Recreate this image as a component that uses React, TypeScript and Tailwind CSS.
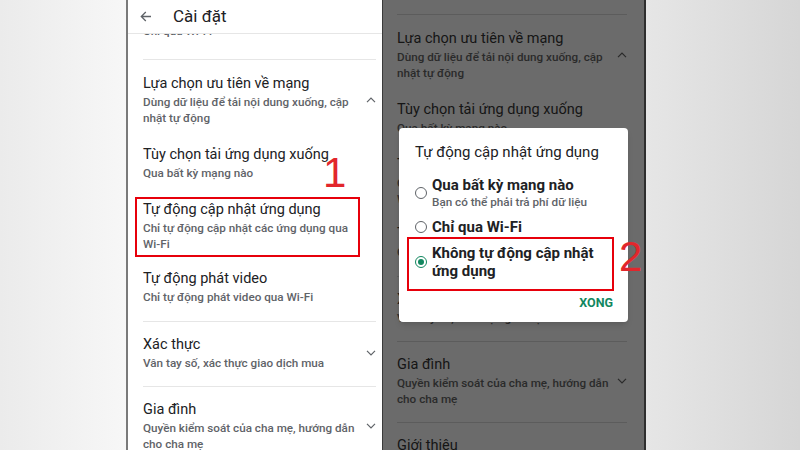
import React from 'react';

type Item = {
    title: string;
    lines: string[];
    chevron?: 'up' | 'down';
    highlight?: boolean;
    gap: string;
};

const items: Item[] = [
    { title: 'Lựa chọn ưu tiên về mạng', lines: ['Dùng dữ liệu để tải nội dung xuống, cập', 'nhật tự động'], chevron: 'up', gap: 'mt-[14px]' },
    { title: 'Tùy chọn tải ứng dụng xuống', lines: ['Qua bất kỳ mạng nào'], gap: 'mt-[19px]' },
    { title: 'Tự động cập nhật ứng dụng', lines: ['Chỉ tự động cập nhật các ứng dụng qua', 'Wi-Fi'], highlight: true, gap: 'mt-[16px]' },
    { title: 'Tự động phát video', lines: ['Chỉ tự động phát video qua Wi-Fi'], gap: 'mt-[12px]' },
];

const Chevron = ({ dir, color }: { dir: 'up' | 'down'; color: string }) => (
    <svg width="10" height="6" viewBox="0 0 10 6" className="shrink-0">
        <polyline
            points={dir === 'up' ? '1,5.2 5,1.2 9,5.2' : '1,0.8 5,4.8 9,0.8'}
            fill="none"
            stroke={color}
            strokeWidth="1.2"
        />
    </svg>
);

const Row = ({ item, dim, showBox }: { item: Item; dim: boolean; showBox: boolean }) => {
    const title = dim ? 'text-[#151515]' : 'text-[#202124]';
    const sub = dim ? 'text-[#2a2a2a]' : 'text-[#5f6368]';
    const chevColor = dim ? '#2a2a2a' : '#5f6368';
    const boxed = item.highlight
        ? `-ml-[8px] mr-[16px] border-2 border-solid pl-[6px] pt-[1px] pb-[3px] ${showBox ? 'border-red-600' : 'border-transparent'}`
        : '';
    return (
        <div className={`${item.gap} ${boxed} flex items-center`}>
            <div className="flex-1">
                <div className={`text-[14.5px] leading-[20px] ${title}`}>{item.title}</div>
                {item.lines.map((l, i) => (
                    <div key={i} className={`text-[11.7px] leading-[16px] font-medium whitespace-nowrap ${sub}`}>{l}</div>
                ))}
            </div>
            {item.chevron && <Chevron dir={item.chevron} color={chevColor} />}
        </div>
    );
};

const SettingsList = ({ dim }: { dim: boolean }) => {
    const line = dim ? 'bg-[#5c5c5c]' : 'bg-[#e6e6e6]';
    const title = dim ? 'text-[#151515]' : 'text-[#202124]';
    const sub = dim ? 'text-[#2a2a2a]' : 'text-[#5f6368]';
    const chevColor = dim ? '#2a2a2a' : '#5f6368';
    return (
        <div>
            {/* cut-off row above first divider */}
            <div className="h-[25px] overflow-hidden">
                <div className={`-mt-[11px] text-[11.7px] leading-[16px] font-medium ${sub}`}>Chỉ qua Wi-Fi</div>
            </div>
            <div className={`h-px ${line}`} />
            {items.map((it) => (
                <Row key={it.title} item={it} dim={dim} showBox={!dim} />
            ))}
            <div className={`mt-[16px] h-px ${line}`} />
            <div className="mt-[13px] flex items-center">
                <div className="flex-1">
                    <div className={`text-[14.5px] leading-[20px] ${title}`}>Xác thực</div>
                    <div className={`text-[11.7px] leading-[16px] font-medium ${sub}`}>Vân tay số, xác thực giao dịch mua</div>
                </div>
                <Chevron dir="down" color={chevColor} />
            </div>
            <div className={`mt-[15px] h-px ${line}`} />
            <div className="mt-[13px] flex items-center">
                <div className="flex-1">
                    <div className={`text-[14.5px] leading-[20px] ${title}`}>Gia đình</div>
                    <div className={`text-[11.7px] leading-[16px] font-medium whitespace-nowrap ${sub}`}>Quyền kiểm soát của cha mẹ, hướng dẫn</div>
                    <div className={`text-[11.7px] leading-[16px] font-medium ${sub}`}>cho cha mẹ</div>
                </div>
                <Chevron dir="down" color={chevColor} />
            </div>
            <div className={`mt-[15px] h-px ${line}`} />
            <div className={`mt-[13px] text-[14.5px] leading-[20px] ${title}`}>Giới thiệu</div>
        </div>
    );
};

const Radio = ({ checked }: { checked?: boolean }) => (
    <div
        className={`w-[12px] h-[12px] shrink-0 rounded-full border-[1.5px] flex items-center justify-center ${checked ? 'border-[#12875f]' : 'border-[#5f6368]'}`}
    >
        {checked && <div className="w-[6px] h-[6px] rounded-full bg-[#12875f]" />}
    </div>
);

export default function App() {
    return (
        <div
            className="w-[800px] h-[450px] flex overflow-hidden"
            style={{ fontFamily: 'Roboto, "Noto Sans", sans-serif' }}
        >
            <div className="w-[126px] h-full bg-gradient-to-r from-[#ebebeb] to-[#f7f7f7]" />

            {/* Left phone */}
            <div className="relative w-[256px] h-full bg-white border-l-2 border-[#7a7a7a] overflow-hidden">
                <div className="h-[34px] flex items-center pl-[12px] border-b border-[#e6e6e6]">
                    <svg width="12" height="11" viewBox="0 0 12 11">
                        <path d="M11 5.5H1.5M5.8 1L1.3 5.5l4.5 4.5" fill="none" stroke="#5f6368" strokeWidth="1.3" />
                    </svg>
                    <span className="ml-[21px] text-[17px] text-[#202124]">Cài đặt</span>
                </div>
                <div className="pl-[15px] pr-[6px]">
                    <SettingsList dim={false} />
                </div>
                <div
                    className="absolute left-[195px] top-[152px] text-[42px] leading-none text-[#e2262c]"
                    style={{ fontFamily: '"Liberation Sans", sans-serif' }}
                >
                    1
                </div>
            </div>

            {/* Right phone */}
            <div className="relative w-[264px] h-full bg-[#6b6b6b] border-l border-[#3a3a3a] border-r-2 border-r-[#2e2e2e] overflow-hidden">
                <div className="-mt-[11px] pl-[14px] pr-[17px]">
                    <SettingsList dim={true} />
                </div>

                <div className="absolute left-[16px] top-[128px] w-[229px] h-[194px] rounded-[4px] bg-white shadow-md pl-[16px] pr-[15px] pt-[14px]">
                    <div className="text-[15px] leading-[20px] text-[#202124]">Tự động cập nhật ứng dụng</div>
                    <div className="mt-[14px] flex items-center gap-[5px]">
                        <Radio />
                        <div>
                            <div className="text-[15px] leading-[18px] font-bold text-[#202124]">Qua bất kỳ mạng nào</div>
                            <div className="text-[11.7px] leading-[16px] font-medium text-[#5f6368]">Bạn có thể phải trả phí dữ liệu</div>
                        </div>
                    </div>
                    <div className="mt-[8px] flex items-center gap-[5px]">
                        <Radio />
                        <div className="text-[15px] leading-[18px] font-bold text-[#202124]">Chỉ qua Wi-Fi</div>
                    </div>
                    <div className="mt-[1px] -ml-[8px] -mr-[1px] border-2 border-solid border-red-600 pl-[6px] pt-[5px] pb-[9px] flex items-center gap-[5px]">
                        <Radio checked />
                        <div className="text-[15px] leading-[18px] font-bold text-[#202124]">
                            Không tự động cập nhật
                            <br />
                            ứng dụng
                        </div>
                    </div>
                    <div className="mt-[4px] text-right text-[12.5px] leading-[16px] font-bold text-[#12875f]">XONG</div>
                </div>

                <div
                    className="absolute left-[236px] top-[236px] text-[42px] leading-none text-[#e2262c]"
                    style={{ fontFamily: '"Liberation Sans", sans-serif' }}
                >
                    2
                </div>
            </div>

            <div className="flex-1 h-full bg-gradient-to-r from-[#e6e6e6] to-[#d6d6d6]" />
        </div>
    );
}
